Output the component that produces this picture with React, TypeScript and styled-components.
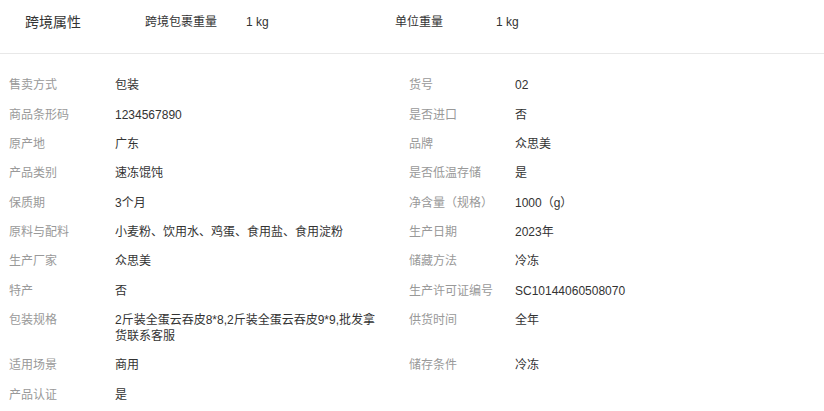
import styled, { createGlobalStyle } from 'styled-components';

const GlobalStyle = createGlobalStyle`
  body {
    margin: 0;
    background: #fff;
    font-family: "Liberation Sans", "Noto Sans CJK SC", sans-serif;
    color: #333;
  }
`;

const CrossBorderBar = styled.div`
  display: flex;
  align-items: center;
  padding: 12px 0 21px 25px;
  border-bottom: 1px solid #e8e8e8;
`;

const BarTitle = styled.div`
  width: 120px;
  font-size: 14px;
  line-height: 20px;
  color: #333;
`;

const BarItem = styled.div`
  display: flex;
  width: 250px;
  font-size: 12px;
  line-height: 20px;
`;

const BarLabel = styled.div`
  width: 101px;
  color: #333;
`;

const BarValue = styled.div`
  color: #333;
`;

const AttrGrid = styled.div`
  display: grid;
  grid-template-columns: 400px 400px;
  padding-top: 17.3px;
`;

const AttrCell = styled.div`
  display: flex;
  padding: 6.9px 20px 6.9px 9px;
  font-size: 12px;
  line-height: 15.6px;
`;

const AttrLabel = styled.div`
  flex: 0 0 106px;
  color: #999;
`;

const AttrValue = styled.div`
  flex: 1;
  color: #333;
  word-break: break-all;
`;

const attributes: [string, string][] = [
  ['售卖方式', '包装'],
  ['货号', '02'],
  ['商品条形码', '1234567890'],
  ['是否进口', '否'],
  ['原产地', '广东'],
  ['品牌', '众思美'],
  ['产品类别', '速冻馄饨'],
  ['是否低温存储', '是'],
  ['保质期', '3个月'],
  ['净含量（规格）', '1000（g）'],
  ['原料与配料', '小麦粉、饮用水、鸡蛋、食用盐、食用淀粉'],
  ['生产日期', '2023年'],
  ['生产厂家', '众思美'],
  ['储藏方法', '冷冻'],
  ['特产', '否'],
  ['生产许可证编号', 'SC10144060508070'],
  ['包装规格', '2斤装全蛋云吞皮8*8,2斤装全蛋云吞皮9*9,批发拿货联系客服'],
  ['供货时间', '全年'],
  ['适用场景', '商用'],
  ['储存条件', '冷冻'],
  ['产品认证', '是'],
];

function App() {
  return (
    <>
      <GlobalStyle />
      <CrossBorderBar>
        <BarTitle>{'跨境属性'}</BarTitle>
        <BarItem>
          <BarLabel>{'跨境包裹重量'}</BarLabel>
          <BarValue>{'1 kg'}</BarValue>
        </BarItem>
        <BarItem>
          <BarLabel>{'单位重量'}</BarLabel>
          <BarValue>{'1 kg'}</BarValue>
        </BarItem>
      </CrossBorderBar>
      <AttrGrid>
        {attributes.map(([label, value]) => (
          <AttrCell key={label}>
            <AttrLabel>{label}</AttrLabel>
            <AttrValue>{value}</AttrValue>
          </AttrCell>
        ))}
      </AttrGrid>
    </>
  );
}

export default App;
